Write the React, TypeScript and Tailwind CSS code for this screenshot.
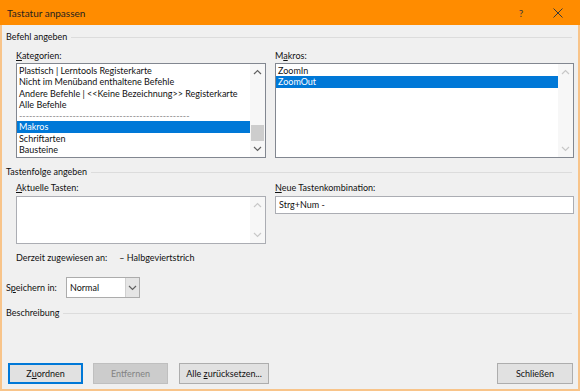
import React from 'react';

const font = { fontFamily: 'Lato, "Liberation Sans", sans-serif' };

function Legend({ title }: { title: string }) {
  return (
    <div className="flex items-center gap-[4px] h-[14px] pr-[6px]">
      <span>{title}</span>
      <div className="flex-1 h-px bg-[#dcdcdc]" />
    </div>
  );
}

function Chevron({ up, faint }: { up?: boolean; faint?: boolean }) {
  return (
    <svg width="9" height="6" viewBox="0 0 9 6" className={faint ? 'text-[#c8c8c8]' : 'text-[#606060]'}>
      <path d={up ? 'M1 5 L4.5 1.5 L8 5' : 'M1 1 L4.5 4.5 L8 1'} fill="none" stroke="currentColor" strokeWidth="1.2" />
    </svg>
  );
}

function ScrollBar({ thumb, faint }: { thumb?: boolean; faint?: boolean }) {
  return (
    <div className="w-[15px] shrink-0 flex flex-col items-center py-[5px] bg-[#f7f7f7]">
      <Chevron up faint={faint} />
      {thumb && <div className="w-[13px] h-[16px] bg-[#cdcdcd] mt-[50px]" />}
      <div className="flex-1" />
      <Chevron faint={faint} />
    </div>
  );
}

const kategorien = [
  'Plastisch | Lerntools Registerkarte',
  'Nicht im Menüband enthaltene Befehle',
  'Andere Befehle | <<Keine Bezeichnung>> Registerkarte',
  'Alle Befehle',
  '---------------------------------------------------',
  'Makros',
  'Schriftarten',
  'Bausteine',
];

function Button({ children, variant }: { children: React.ReactNode; variant?: 'default' | 'disabled' }) {
  const cls =
    variant === 'default'
      ? 'border-[#0078d7] shadow-[inset_0_0_0_1px_#0078d7] bg-[#e1e1e1] text-[#111]'
      : variant === 'disabled'
      ? 'border-[#bfbfbf] bg-[#cccccc] text-[#838383]'
      : 'border-[#adadad] bg-[#e1e1e1] text-[#111]';
  return (
    <div className={`h-[21px] border flex items-center justify-center whitespace-pre ${cls}`}>{children}</div>
  );
}

export default function App() {
  return (
    <div style={font} className="w-[580px] h-[391px] flex flex-col text-[9px] text-[#111] leading-[14px]">
      <div className="h-[25px] bg-[#ff8c00] flex items-center pl-[7px] text-[10px] text-[#1f1f1f]">
        <span className="flex-1">Tastatur anpassen</span>
        <span className="w-[20px] text-center text-[#3a3a3a] mr-[22px]">?</span>
        <svg width="10" height="10" viewBox="0 0 10 10" className="mr-[17px]">
          <path d="M0.5 0.5 L9.5 9.5 M9.5 0.5 L0.5 9.5" stroke="#3a3a3a" strokeWidth="1" />
        </svg>
      </div>
      <div className="flex-1 border-x-2 border-b-2 border-[#f8c48a] bg-[#f0f0f0] flex flex-col pl-[4px] pt-[5px]">
        <Legend title="Befehl angeben" />
        <div className="flex gap-[9px] pl-[10px] mt-[5px]">
          <div className="w-[250px] flex flex-col">
            <span className="h-[14px]"><span className="underline">K</span>ategorien:</span>
            <div className="h-[95px] border border-[#828790] bg-white flex">
              <div className="flex-1 min-w-0 pt-[1px]">
                {kategorien.map((k) => (
                  <div
                    key={k}
                    className={`h-[11.3px] leading-[11.3px] pl-[2px] whitespace-nowrap overflow-hidden ${
                      k === 'Makros' ? 'bg-[#0078d7] text-white' : ''
                    } ${k.startsWith('---') ? 'text-[#8a8a8a]' : ''}`}
                  >
                    {k}
                  </div>
                ))}
              </div>
              <ScrollBar thumb />
            </div>
          </div>
          <div className="w-[299px] flex flex-col">
            <span className="h-[14px]">M<span className="underline">a</span>kros:</span>
            <div className="h-[95px] border border-[#828790] bg-white flex">
              <div className="flex-1 min-w-0 pt-[1px]">
                <div className="h-[11.3px] leading-[11.3px] pl-[2px]">ZoomIn</div>
                <div className="h-[11.3px] leading-[11.3px] pl-[2px] bg-[#0078d7] text-white">ZoomOut</div>
              </div>
              <ScrollBar faint />
            </div>
          </div>
        </div>
        <div className="mt-[7px]">
          <Legend title="Tastenfolge angeben" />
        </div>
        <div className="flex gap-[9px] pl-[10px] mt-[2px]">
          <div className="w-[250px] flex flex-col">
            <span className="h-[14px]"><span className="underline">A</span>ktuelle Tasten:</span>
            <div className="mt-[1px] h-[48px] border border-[#abadb3] bg-white flex">
              <div className="flex-1" />
              <ScrollBar faint />
            </div>
          </div>
          <div className="w-[299px] flex flex-col">
            <span className="h-[14px]"><span className="underline">N</span>eue Tastenkombination:</span>
            <div className="mt-[1px] h-[18px] border border-[#abadb3] bg-white pl-[3px] flex items-center">
              Strg+Num -
            </div>
          </div>
        </div>
        <div className="pl-[10px] mt-[7px] flex gap-[12px]">
          <span>Derzeit zugewiesen an:</span>
          <span>– Halbgeviertstrich</span>
        </div>
        <div className="flex items-center mt-[12px]">
          <span className="w-[60px] whitespace-nowrap">S<span className="underline">p</span>eichern in:</span>
          <div className="w-[74px] h-[21px] border border-[#acacac] bg-white flex items-center">
            <span className="flex-1 pl-[3px]">Normal</span>
            <div className="w-[14px] h-full bg-[#e5e5e5] border-l border-[#d0d0d0] flex items-center justify-center">
              <Chevron />
            </div>
          </div>
        </div>
        <div className="mt-[8px]">
          <Legend title="Beschreibung" />
        </div>
        <div className="flex-1" />
        <div className="flex items-center pl-[2px] pr-[5px] mb-[5px]">
          <div className="w-[75px]">
            <Button variant="default">Z<span className="underline">u</span>ordnen</Button>
          </div>
          <div className="w-[75px] ml-[10px]">
            <Button variant="disabled">Entfernen</Button>
          </div>
          <div className="w-[90px] ml-[11px]">
            <Button>Alle <span className="underline">z</span>urücksetzen...</Button>
          </div>
          <div className="flex-1" />
          <div className="w-[76px]">
            <Button>Schließen</Button>
          </div>
        </div>
      </div>
    </div>
  );
}
